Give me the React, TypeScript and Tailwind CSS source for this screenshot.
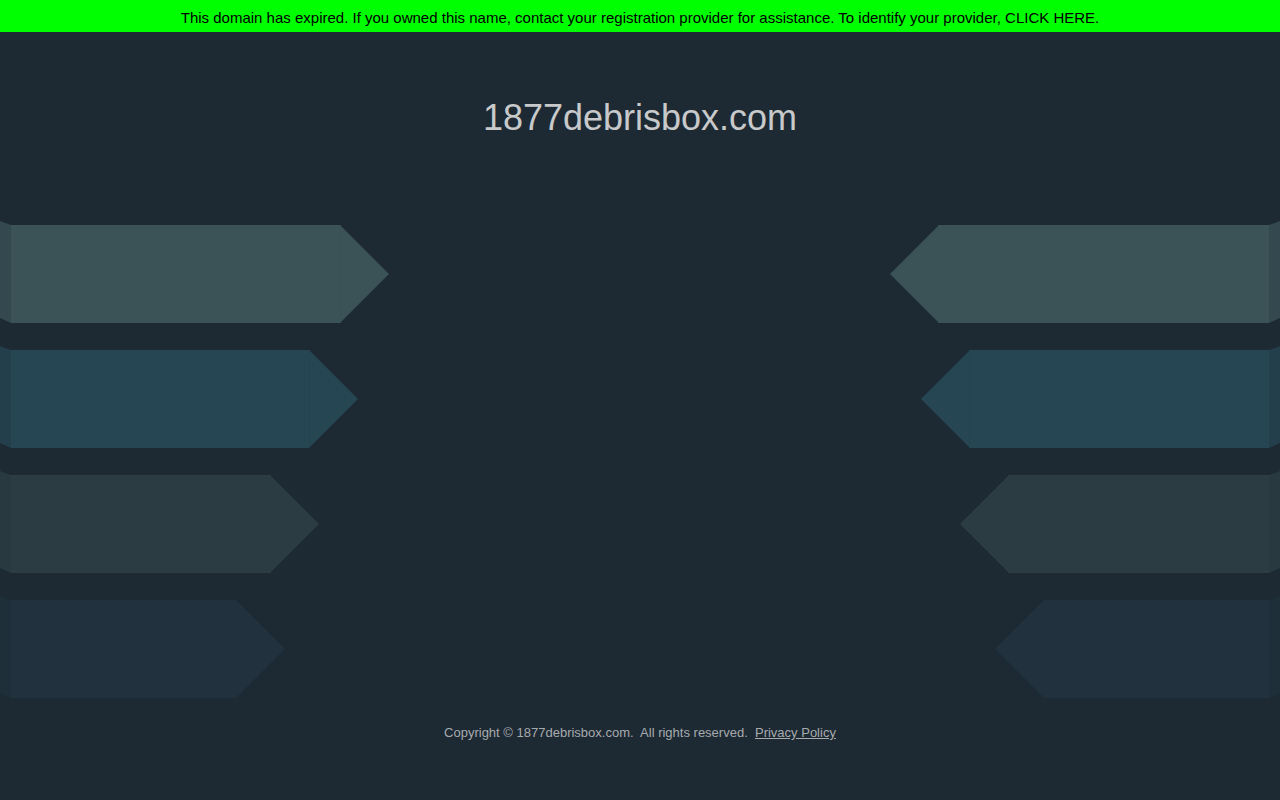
import React from 'react';

type Arrow = { bodyEnd: number; body: string; piece: string; edge: string };

const rows: Arrow[] = [
  { bodyEnd: 340, body: '#3b5257', piece: '#33494f', edge: '#385056' },
  { bodyEnd: 309, body: '#264654', piece: '#233f4c', edge: '#25434f' },
  { bodyEnd: 270, body: '#2b3d43', piece: '#283a40', edge: '#2a3b41' },
  { bodyEnd: 236, body: '#21323e', piece: '#1f2f3a', edge: '#20313c' },
];

const ArrowRight: React.FC<{ a: Arrow }> = ({ a }) => {
  const w = a.bodyEnd + 49;
  return (
    <svg width={w} height={108} viewBox={`0 0 ${w} 108`} className="block">
      <polygon points="0,1 11,5 11,103 0,98" fill={a.piece} />
      <rect x={11} y={5} width={a.bodyEnd - 11} height={98} fill={a.body} />
      <polygon points={`${a.bodyEnd},5 ${w},54 ${a.bodyEnd},103`} fill={a.body} />
      <line x1={a.bodyEnd + 0.5} y1={5} x2={a.bodyEnd + 0.5} y2={103} stroke={a.edge} strokeWidth={1} />
    </svg>
  );
};

const ArrowLeft: React.FC<{ a: Arrow }> = ({ a }) => {
  const w = a.bodyEnd + 49;
  // mirrored copy of the right-pointing arrow
  return (
    <svg width={w} height={108} viewBox={`0 0 ${w} 108`} className="block">
      <g transform={`translate(${w},0) scale(-1,1)`}>
        <polygon points="0,1 11,5 11,103 0,98" fill={a.piece} />
        <rect x={11} y={5} width={a.bodyEnd - 11} height={98} fill={a.body} />
        <polygon points={`${a.bodyEnd},5 ${w},54 ${a.bodyEnd},103`} fill={a.body} />
        <line x1={a.bodyEnd + 0.5} y1={5} x2={a.bodyEnd + 0.5} y2={103} stroke={a.edge} strokeWidth={1} />
      </g>
    </svg>
  );
};

export default function App() {
  const font = { fontFamily: '"Liberation Sans", Arial, sans-serif' };
  return (
    <div className="min-h-screen w-full bg-[#1d2933] flex flex-col" style={font}>
      <div className="h-[32px] bg-[#00ff00] flex items-center justify-center text-black text-[15px] leading-none pt-[3px]">
        This domain has expired. If you owned this name, contact your registration provider for assistance. To identify your provider, CLICK HERE.
      </div>

      <h1 className="pt-[64px] text-center text-[36px] leading-[44px] text-[#c8c9ca] font-normal">
        1877debrisbox.com
      </h1>

      <div className="mt-[80px] flex justify-between">
        <div className="flex flex-col items-start gap-[17px]">
          {rows.map((a, i) => (
            <ArrowRight key={i} a={a} />
          ))}
        </div>
        <div className="flex flex-col items-end gap-[17px]">
          {rows.map((a, i) => (
            <ArrowLeft key={i} a={{ ...a, bodyEnd: [341, 310, 271, 236][i] }} />
          ))}
        </div>
      </div>

      <div className="mt-[22px] text-center text-[13px] leading-[16px] text-[#a7abae]">
        Copyright © 1877debrisbox.com.&nbsp; All rights reserved.&nbsp;{' '}
        <a className="underline text-[#a7abae]">Privacy Policy</a>
      </div>
    </div>
  );
}
